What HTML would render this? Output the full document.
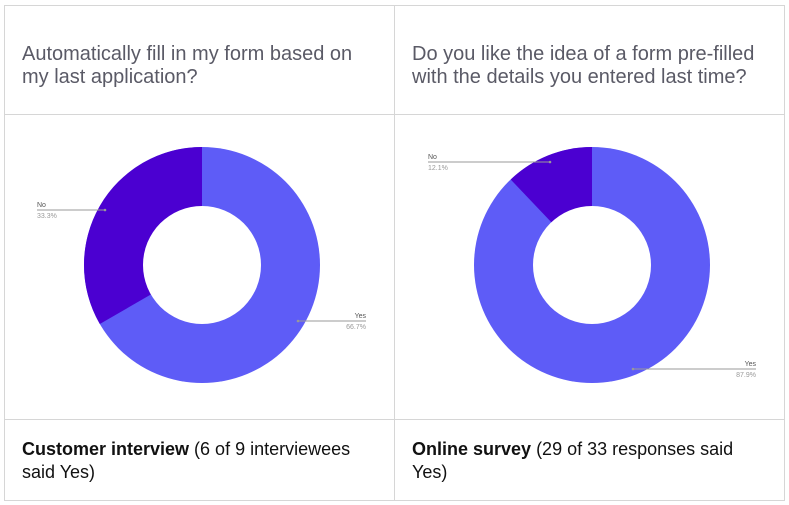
<!DOCTYPE html>
<html><head><style>
body{margin:0;width:789px;height:505px;background:#fff;position:relative;overflow:hidden;font-family:"Liberation Sans",Arial,sans-serif}
.b{position:absolute;background:#d6d6d6}
.t{position:absolute;font-size:20px;line-height:23px;color:#5a5a66;width:350px}
.f{position:absolute;font-size:18px;line-height:23px;color:#111;width:345px}
</style></head><body>
<div class="b" style="left:4px;top:5px;width:781px;height:1px"></div>
<div class="b" style="left:4px;top:114px;width:781px;height:1px"></div>
<div class="b" style="left:4px;top:419px;width:781px;height:1px"></div>
<div class="b" style="left:4px;top:500px;width:781px;height:1px"></div>
<div class="b" style="left:4px;top:5px;width:1px;height:496px"></div>
<div class="b" style="left:394px;top:5px;width:1px;height:496px"></div>
<div class="b" style="left:784px;top:5px;width:1px;height:496px"></div>
<div class="t" style="left:22px;top:43px">Automatically fill in my form based on my last application?</div>
<div class="t" style="left:412px;top:43px">Do you like the idea of a form pre-filled with the details you entered last time?</div>
<div class="f" style="left:22px;top:438px"><b>Customer interview</b> (6 of 9 interviewees said Yes)</div>
<div class="f" style="left:412px;top:438px"><b>Online survey</b> (29 of 33 responses said Yes)</div>
<svg width="789" height="505" style="position:absolute;left:0;top:0" font-family="Liberation Sans, Arial, sans-serif" font-size="7">
<circle cx="202" cy="265" r="118" fill="#5e5cf7"/>
<path d="M202 147 A118 118 0 0 0 99.8 324 L202 265Z" fill="#4b00d1"/>
<circle cx="202" cy="265" r="59" fill="#fff"/>
<line x1="37" y1="210" x2="105" y2="210" stroke="#999" stroke-width="1"/><circle cx="105" cy="210" r="1.3" fill="#999"/>
<text x="37" y="207" fill="#555">No</text><text x="37" y="218" fill="#999">33.3%</text>
<line x1="298" y1="321" x2="366" y2="321" stroke="#999"/><circle cx="298" cy="321" r="1.3" fill="#999"/>
<text x="366" y="318" fill="#555" text-anchor="end">Yes</text><text x="366" y="329" fill="#999" text-anchor="end">66.7%</text>
<circle cx="592" cy="265" r="118" fill="#5e5cf7"/>
<path d="M592 147 A118 118 0 0 0 510.7 179.5 L592 265Z" fill="#4b00d1"/>
<circle cx="592" cy="265" r="59" fill="#fff"/>
<line x1="428" y1="162" x2="550" y2="162" stroke="#999"/><circle cx="550" cy="162" r="1.3" fill="#999"/>
<text x="428" y="159" fill="#555">No</text><text x="428" y="170" fill="#999">12.1%</text>
<line x1="633" y1="369" x2="756" y2="369" stroke="#999"/><circle cx="633" cy="369" r="1.3" fill="#999"/>
<text x="756" y="366" fill="#555" text-anchor="end">Yes</text><text x="756" y="377" fill="#999" text-anchor="end">87.9%</text>
</svg>
</body></html>
